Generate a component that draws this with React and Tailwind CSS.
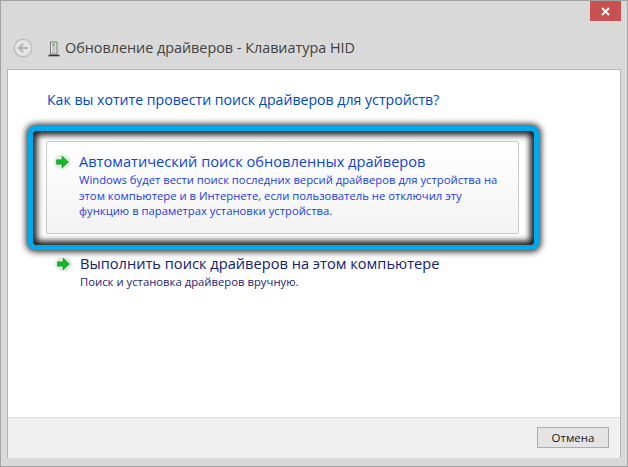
import React from 'react';

function GreenArrow() {
  return (
    <svg width="18" height="16" viewBox="0 0 18 16" className="shrink-0">
      <ellipse cx="8.500" cy="8" rx="8.500" ry="7.500" fill="#e3ebe3" />
      <path d="M2.500 5.800h5.500V2l6.500 6L8 14v-3.800H2.500z" fill="#12b82a" stroke="#0c8a1e" strokeWidth="0.500" />
    </svg>
  );
}

function BackButton() {
  return (
    <svg width="20" height="20" viewBox="0 0 20 20" className="shrink-0">
      <circle cx="10" cy="10" r="8.800" fill="#e4e4e4" stroke="#bdbdbd" strokeWidth="1.400" />
      <path d="M15 10H6.500M10 6l-4 4 4 4" fill="none" stroke="#b4b4b4" strokeWidth="2" />
    </svg>
  );
}

function DeviceIcon() {
  return (
    <svg width="12" height="16" viewBox="0 0 12 16" className="shrink-0">
      <path d="M2.500 1h6.500v12h-6.500z" fill="#eeeeee" stroke="#777777" />
      <rect x="4" y="2" width="3.500" height="10" fill="#c4c4c4" />
      <rect x="4.500" y="2.500" width="2" height="2" fill="#45c43c" />
      <path d="M0.500 14.500h11" stroke="#333333" strokeWidth="1.600" />
    </svg>
  );
}

export default function App() {
  return (
    <div className="w-[628px] h-[467px] bg-[#d9d9d9] border border-[#a3a3a3] overflow-hidden flex flex-col relative font-['Open_Sans','Noto_Sans',sans-serif]">
      {/* Close button */}
      <div className="absolute top-0 right-[6px] w-[31px] h-[20px] bg-[#c75050] flex items-center justify-center">
        <svg width="9" height="9" viewBox="0 0 9 9">
          <path d="M1 1l7 7M8 1l-7 7" stroke="#ffffff" strokeWidth="2" />
        </svg>
      </div>

      {/* Header */}
      <div className="h-[68px] shrink-0 pl-[12px] pt-[37px] flex items-start">
        <BackButton />
        <div className="ml-[15px] mt-[3px]"><DeviceIcon /></div>
        <span className="ml-[5px] text-[14.360px] leading-[20px] text-[#404040] whitespace-nowrap">Обновление драйверов - Клавиатура HID</span>
      </div>

      {/* Content panel */}
      <div className="mx-[6px] mb-[8px] flex-1 bg-white border-t border-x border-[#b5b5b5] flex flex-col">
        <div className="flex-1 pl-[39px]">
          <h1 className="mt-[20px] text-[14.140px] leading-[20px] text-[#0046c8] font-normal whitespace-nowrap">Как вы хотите провести поиск драйверов для устройств?</h1>

          <div className="mt-[16px] -ml-[19px] w-[511px] h-[124px] border-[5px] border-[#00a8ec] rounded-[7px] shadow-[0_0_6px_2px_rgba(0,0,0,0.8),inset_0_0_6px_4px_rgba(0,0,0,0.9)] bg-white pt-[10px] pl-[13px]">
            <div className="w-[473px] h-[93px] border border-[#c9c9c9] rounded-[2px] bg-gradient-to-b from-white to-[#f3f3f3] flex items-start pl-[7px] pt-[9px]">
              <div className="mt-[3px]"><GreenArrow /></div>
              <div className="ml-[7px]">
                <div className="text-[14.600px] leading-[20px] text-[#0f3fe0] whitespace-nowrap">Автоматический поиск обновленных драйверов</div>
                <div className="text-[11.280px] leading-[15.500px] mt-[1px] text-[#1a3be8] whitespace-nowrap">
                  Windows будет вести поиск последних версий драйверов для устройства на<br />
                  этом компьютере и в Интернете, если пользователь не отключил эту<br />
                  функцию в параметрах установки устройства.
                </div>
              </div>
            </div>
          </div>

          <div className="mt-[3px] flex items-start pl-[8px]">
            <div className="mt-[3px]"><GreenArrow /></div>
            <div className="ml-[7px]">
              <div className="text-[14.630px] leading-[20px] text-[#12206e] whitespace-nowrap">Выполнить поиск драйверов на этом компьютере</div>
              <div className="text-[11.300px] leading-[15px] mt-[1px] text-[#2a1a70] whitespace-nowrap">Поиск и установка драйверов вручную.</div>
            </div>
          </div>
        </div>

        {/* Footer */}
        <div className="h-[41px] shrink-0 bg-[#f0f0f0] border-t border-[#dfdfdf] flex items-start justify-end pt-[9px] pr-[11px]">
          <button className="w-[72px] h-[21px] bg-[#e4e4e4] border border-[#adadad] text-[11.500px] leading-[18px] text-[#1a1a1a]">Отмена</button>
        </div>
      </div>
    </div>
  );
}
